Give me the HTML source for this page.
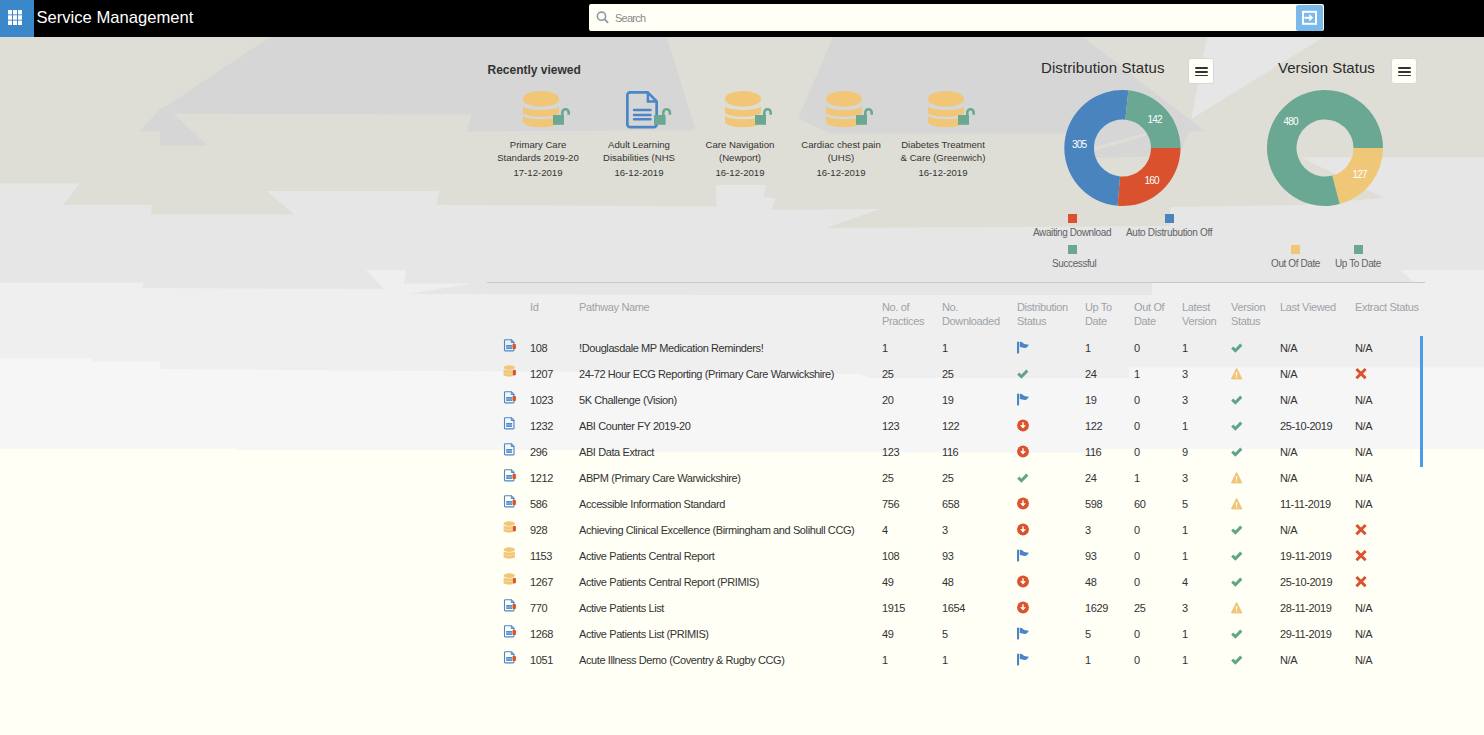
<!DOCTYPE html>
<html><head><meta charset="utf-8"><style>
html,body{margin:0;padding:0;}
body{width:1484px;height:735px;overflow:hidden;position:relative;background:#fffff5;font-family:"Liberation Sans",sans-serif;color:#333;}
.abs{position:absolute;}
#bg{position:absolute;left:0;top:0;}
#top{position:absolute;left:0;top:0;width:1484px;height:37px;background:#000;}
#apps{position:absolute;left:0;top:0;width:34px;height:37px;background:#3a88c9;}
#title{position:absolute;left:36.5px;top:7px;font-size:16.6px;color:#fff;line-height:22px;white-space:nowrap;}
#search{position:absolute;left:589px;top:4px;width:735px;height:27px;background:#fffff6;border-radius:2px;}
#stext{position:absolute;left:26px;top:7px;font-size:11px;color:#8a8a8a;line-height:14px;letter-spacing:-0.75px;}
#sbtn{position:absolute;left:707px;top:1px;width:27px;height:26px;background:#79b9eb;border-radius:2px;}
.th{position:absolute;top:300px;font-size:11px;line-height:14px;color:#9ea3a8;letter-spacing:-0.35px;white-space:nowrap;}
.td{position:absolute;font-size:11px;line-height:26px;height:26px;color:#333;letter-spacing:-0.4px;white-space:nowrap;}
.ic{position:absolute;line-height:0;}
.ic svg{display:block;}
#rvh{position:absolute;left:487.5px;top:62.6px;font-size:12px;font-weight:bold;color:#333;white-space:nowrap;}
.rvi{position:absolute;top:91px;}
.rvt{position:absolute;top:138.4px;width:120px;text-align:center;font-size:9.6px;line-height:13px;color:#333;}
.rvd{margin-top:1.6px;}
.ct{position:absolute;top:58px;font-size:15px;color:#2b2b2b;white-space:nowrap;line-height:20px;}
.mb{position:absolute;top:58.2px;width:26px;height:26.2px;background:#fffff6;border:1px solid #d6d6e0;border-radius:3px;box-sizing:border-box;}
.mb i{position:absolute;left:5.5px;width:13px;height:1.7px;background:#333;border-radius:1px;}
.lg{position:absolute;width:9px;height:9px;}
.lt{position:absolute;font-size:10px;color:#636363;white-space:nowrap;letter-spacing:-0.4px;line-height:12px;}
.dl{position:absolute;font-size:10px;color:#fff;white-space:nowrap;line-height:12px;letter-spacing:-0.75px;}
</style></head><body>
<svg id="bg" width="1484" height="735" viewBox="0 0 1484 735"><rect x="0" y="0" width="1484" height="735" fill="#fffff5"/>
<polygon fill="#f6f6f6" points="0,37 1484,37 1484,449 1100,449 1100,452.5 600,452 600,450 236,450 236,448.5 0,448.5"/>
<polygon fill="#efefef" points="0,37 1484,37 1484,367.5 1129,367.5 1129,378 870,378 860,374 160,369 160,361.5 92,361.5 92,358.5 0,358.5"/>
<polygon fill="#e6e6e6" points="0,37 1484,37 1484,270 1400,270 1415,282.5 1152,282.5 1152,295 700,295 409,294 472.6,283.6 403.6,283.6 406,270 366,270 384,289 143,288 143,282.5 0,282.5"/>
<polygon fill="#dfded6" points="0,37 1484,37 1484,157.5 1301.5,157.5 1384,198 1300,205 1170,207 1170,226 825.6,228 880,209 771,210 775.8,198.6 763.7,196.7 766,185 716,185 716.4,206.4 436,205 439.2,191 266.8,191 294.3,214.6 151.4,214.6 151.4,205 63,205 79.6,183.6 0,183.6"/>
<polygon fill="#d6d6d6" points="270,37 667,37 695.4,130.3 467,131.5 471.4,114.5 173.5,113.7 207.5,145.7 160,145.7 160,131.4 139,131.4 161,108 165,107"/>
<polygon fill="#d6d6d6" points="833,37 1083,37 1205,131.2 1188.4,131.8 1179.7,155.7 1094,158 1094,133.5 829.5,133.4 798,118.3"/>
<polygon fill="#dfded6" points="1094.8,147 1146,133 1146,135.5 1094.8,150.5"/>
<polygon fill="#e6e6e6" points="1207,37 1323.5,37 1191.6,118.7"/>
</svg>
<div id="top">
 <div id="apps"><svg width="34" height="37" viewBox="0 0 34 37" style="position:absolute;left:0;top:0">
 <g fill="#fff"><rect x="8" y="10" width="4" height="4.4"/><rect x="13" y="10" width="4" height="4.4"/><rect x="18" y="10" width="4" height="4.4"/><rect x="8" y="15.3" width="4" height="4.4"/><rect x="13" y="15.3" width="4" height="4.4"/><rect x="18" y="15.3" width="4" height="4.4"/><rect x="8" y="20.6" width="4" height="4.4"/><rect x="13" y="20.6" width="4" height="4.4"/><rect x="18" y="20.6" width="4" height="4.4"/></g></svg></div>
 <div id="title">Service Management</div>
 <div id="search">
  <svg width="20" height="20" viewBox="0 0 20 20" style="position:absolute;left:5px;top:5px"><circle cx="7.5" cy="7.2" r="4.1" fill="none" stroke="#8d9aa6" stroke-width="1.6"/><path d="M10.8 10.3 L13.6 13.4" stroke="#8d9aa6" stroke-width="1.8" stroke-linecap="round"/></svg>
  <div id="stext">Search</div>
  <div id="sbtn"><svg width="27" height="26" viewBox="0 0 27 26" style="position:absolute;left:0;top:0"><rect x="7" y="6.8" width="13" height="12" fill="none" stroke="#fff" stroke-width="2"/><path d="M8.5 12.8 H14.2" stroke="#fff" stroke-width="2"/><path d="M13.4 9 L17.2 12.8 L13.4 16.6z" fill="#fff"/></svg></div>
 </div>
</div>
<div id="rvh">Recently viewed</div>
<svg class="rvi" style="left:523px" width="50" height="40" viewBox="0 0 50 40"><ellipse cx="18" cy="7.9" rx="18" ry="7.9" fill="#f1c677"/><path d="M0 14.8 A18 4.3 0 0 0 36 14.8 V21.6 A18 4.2 0 0 1 0 21.6z" fill="#f1c677"/><path d="M0 24.6 A18 3.7 0 0 0 36 24.6 V30.7 A18 5.6 0 0 1 0 30.7z" fill="#f1c677"/><rect x="30" y="24" width="11" height="9.8" fill="#6aa892"/><path d="M39.3 24.5 V21.5 A3.2 3.2 0 0 1 45.7 21.5 V23.8" fill="none" stroke="#6aa892" stroke-width="2.6"/></svg>
<div class="rvt" style="left:478px">Primary Care<br>Standards 2019-20<div class="rvd">17-12-2019</div></div>
<svg class="rvi" style="left:626px" width="50" height="40" viewBox="0 0 50 40"><path d="M4.2 1.35 H21.8 L30.65 10.4 V33.4 A2.8 2.8 0 0 1 27.85 36.2 H4.15 A2.8 2.8 0 0 1 1.35 33.4 V4.15 A2.8 2.8 0 0 1 4.2 1.35z" fill="none" stroke="#4a86c6" stroke-width="2.7" stroke-linejoin="round"/><path d="M21.9 1.4 V10.4 H30.6" fill="none" stroke="#4a86c6" stroke-width="2.5"/><path d="M8 19 H24.5 M8 24 H24.5 M8 28.3 H24.5" stroke="#4a86c6" stroke-width="2.4" stroke-linecap="round"/><rect x="28" y="24" width="11.6" height="9.8" fill="#6aa892"/><path d="M37.3 24.5 V21.5 A3.3 3.3 0 0 1 43.9 21.5 V23.8" fill="none" stroke="#6aa892" stroke-width="2.6"/></svg>
<div class="rvt" style="left:579px">Adult Learning<br>Disabilities (NHS<div class="rvd">16-12-2019</div></div>
<svg class="rvi" style="left:725px" width="50" height="40" viewBox="0 0 50 40"><ellipse cx="18" cy="7.9" rx="18" ry="7.9" fill="#f1c677"/><path d="M0 14.8 A18 4.3 0 0 0 36 14.8 V21.6 A18 4.2 0 0 1 0 21.6z" fill="#f1c677"/><path d="M0 24.6 A18 3.7 0 0 0 36 24.6 V30.7 A18 5.6 0 0 1 0 30.7z" fill="#f1c677"/><rect x="30" y="24" width="11" height="9.8" fill="#6aa892"/><path d="M39.3 24.5 V21.5 A3.2 3.2 0 0 1 45.7 21.5 V23.8" fill="none" stroke="#6aa892" stroke-width="2.6"/></svg>
<div class="rvt" style="left:680px">Care Navigation<br>(Newport)<div class="rvd">16-12-2019</div></div>
<svg class="rvi" style="left:826px" width="50" height="40" viewBox="0 0 50 40"><ellipse cx="18" cy="7.9" rx="18" ry="7.9" fill="#f1c677"/><path d="M0 14.8 A18 4.3 0 0 0 36 14.8 V21.6 A18 4.2 0 0 1 0 21.6z" fill="#f1c677"/><path d="M0 24.6 A18 3.7 0 0 0 36 24.6 V30.7 A18 5.6 0 0 1 0 30.7z" fill="#f1c677"/><rect x="30" y="24" width="11" height="9.8" fill="#6aa892"/><path d="M39.3 24.5 V21.5 A3.2 3.2 0 0 1 45.7 21.5 V23.8" fill="none" stroke="#6aa892" stroke-width="2.6"/></svg>
<div class="rvt" style="left:781px">Cardiac chest pain<br>(UHS)<div class="rvd">16-12-2019</div></div>
<svg class="rvi" style="left:928px" width="50" height="40" viewBox="0 0 50 40"><ellipse cx="18" cy="7.9" rx="18" ry="7.9" fill="#f1c677"/><path d="M0 14.8 A18 4.3 0 0 0 36 14.8 V21.6 A18 4.2 0 0 1 0 21.6z" fill="#f1c677"/><path d="M0 24.6 A18 3.7 0 0 0 36 24.6 V30.7 A18 5.6 0 0 1 0 30.7z" fill="#f1c677"/><rect x="30" y="24" width="11" height="9.8" fill="#6aa892"/><path d="M39.3 24.5 V21.5 A3.2 3.2 0 0 1 45.7 21.5 V23.8" fill="none" stroke="#6aa892" stroke-width="2.6"/></svg>
<div class="rvt" style="left:883px">Diabetes Treatment<br>&amp; Care (Greenwich)<div class="rvd">16-12-2019</div></div>
<div class="ct" style="left:1041px;letter-spacing:0.1px">Distribution Status</div>
<div class="mb" style="left:1188.4px"><i style="top:7.9px"></i><i style="top:11.8px"></i><i style="top:15.4px"></i></div>
<div class="ct" style="left:1278px">Version Status</div>
<div class="mb" style="left:1391.4px"><i style="top:7.9px"></i><i style="top:11.8px"></i><i style="top:15.4px"></i></div>
<svg class="abs" style="left:0;top:0" width="1484" height="300" viewBox="0 0 1484 300"><path d="M1180.50 148.00 A58 58 0 0 1 1117.55 205.79 L1120.07 176.40 A28.5 28.5 0 0 0 1151.00 148.00z" fill="#d9522d"/><path d="M1117.55 205.79 A58 58 0 1 1 1128.34 90.30 L1125.37 119.65 A28.5 28.5 0 1 0 1120.07 176.40z" fill="#4a84bf"/><path d="M1128.34 90.30 A58 58 0 0 1 1180.50 148.00 L1151.00 148.00 A28.5 28.5 0 0 0 1125.37 119.65z" fill="#6aa893"/><path d="M1383.00 148.00 A58 58 0 0 1 1339.70 204.11 L1332.22 175.57 A28.5 28.5 0 0 0 1353.50 148.00z" fill="#f0c677"/><path d="M1339.70 204.11 A58 58 0 1 1 1383.00 148.00 L1353.50 148.00 A28.5 28.5 0 1 0 1332.22 175.57z" fill="#6aa893"/></svg>
<div class="dl" style="left:1072px;top:138.6px">305</div>
<div class="dl" style="left:1147.5px;top:113.6px">142</div>
<div class="dl" style="left:1144.5px;top:174.6px">160</div>
<div class="dl" style="left:1283.5px;top:115.6px">480</div>
<div class="dl" style="left:1352.5px;top:168.6px">127</div>
<div class="lg" style="left:1068px;top:214px;background:#d9522d"></div>
<div class="lt" style="left:1033px;top:227px">Awaiting Download</div>
<div class="lg" style="left:1165px;top:214px;background:#4a84bf"></div>
<div class="lt" style="left:1126px;top:227px;letter-spacing:-0.3px">Auto Distrubution Off</div>
<div class="lg" style="left:1068px;top:245px;background:#6aa893"></div>
<div class="lt" style="left:1052px;top:258px">Successful</div>
<div class="lg" style="left:1291px;top:245px;background:#f0c677"></div>
<div class="lt" style="left:1271px;top:258px">Out Of Date</div>
<div class="lg" style="left:1354px;top:245px;background:#6aa893"></div>
<div class="lt" style="left:1335px;top:258px">Up To Date</div>
<div class="abs" style="left:487px;top:282px;width:938px;height:1px;background:#c9c9c9"></div>
<div class="th" style="left:530px">Id</div>
<div class="th" style="left:579px">Pathway Name</div>
<div class="th" style="left:882px">No. of<br>Practices</div>
<div class="th" style="left:942px">No.<br>Downloaded</div>
<div class="th" style="left:1017px">Distribution<br>Status</div>
<div class="th" style="left:1085px">Up To<br>Date</div>
<div class="th" style="left:1134px">Out Of<br>Date</div>
<div class="th" style="left:1182px">Latest<br>Version</div>
<div class="th" style="left:1231px">Version<br>Status</div>
<div class="th" style="left:1280px">Last Viewed</div>
<div class="th" style="left:1355px">Extract Status</div>
<div class="ic" style="left:503px;top:338.0px"><svg width="17" height="15" viewBox="0 0 17 15"><path d="M2.3 1.7 H8.4 L11 4.3 V12.1 Q11 12.9 10.2 12.9 H2.3 Q1.5 12.9 1.5 12.1 V2.5 Q1.5 1.7 2.3 1.7z" fill="none" stroke="#4a86c6" stroke-width="1.1"/><path d="M8.3 1.8 V4.5 H11" fill="none" stroke="#4a86c6" stroke-width="1"/><rect x="3.2" y="7.2" width="5.9" height="3.5" fill="#8fb0da"/><rect x="3.2" y="7.1" width="5.9" height="1.1" fill="#4a86c6"/><rect x="3.2" y="9.7" width="5.9" height="1.1" fill="#4a86c6"/><rect x="9.5" y="6" width="3.4" height="5" rx="0.8" fill="#d9532c"/></svg></div>
<div class="td" style="left:530px;top:334.7px">108</div>
<div class="td" style="left:579px;top:334.7px">!Douglasdale MP Medication Reminders!</div>
<div class="td" style="left:882px;top:334.7px">1</div>
<div class="td" style="left:942px;top:334.7px">1</div>
<div class="ic" style="left:1016px;top:339.5px"><svg width="15" height="15" viewBox="0 0 15 15"><rect x="1" y="1.7" width="2.1" height="11.7" fill="#4a86c6"/><path d="M3.8 1.8 C5.6 1.5 6.6 2.6 7.6 3.5 S10.6 4.5 12.9 4.7 L11.5 6.7 Q10 8.1 8.3 7.9 T3.8 7.1 Z" fill="#4a86c6"/></svg></div>
<div class="td" style="left:1085px;top:334.7px">1</div>
<div class="td" style="left:1134px;top:334.7px">0</div>
<div class="td" style="left:1182px;top:334.7px">1</div>
<div class="ic" style="left:1230px;top:339.5px"><svg width="15" height="15" viewBox="0 0 15 15"><path d="M2.2 7.7 L5.4 10.7 L11.3 4.6" fill="none" stroke="#62a48b" stroke-width="3"/></svg></div>
<div class="td" style="left:1280px;top:334.7px">N/A</div>
<div class="td" style="left:1355px;top:334.7px">N/A</div><div class="ic" style="left:503px;top:364.0px"><svg width="17" height="15" viewBox="0 0 17 15"><ellipse cx="6.3" cy="3.6" rx="5.6" ry="2.3" fill="#f1c677"/><path d="M0.7 6.1 Q6.3 7.6 11.9 6.1 V8.4 Q6.3 9.9 0.7 8.4z" fill="#f1c677"/><path d="M0.7 9.1 Q6.3 10.6 11.9 9.1 V11.3 Q6.3 14 0.7 11.3z" fill="#f1c677"/><path d="M0.7 5.2 Q6.3 7.2 11.9 5.2 V12 H0.7z" fill="#f1c677" opacity="0.45"/><rect x="9.9" y="6" width="3" height="5.2" rx="0.8" fill="#d9532c"/></svg></div>
<div class="td" style="left:530px;top:360.7px">1207</div>
<div class="td" style="left:579px;top:360.7px">24-72 Hour ECG Reporting (Primary Care Warwickshire)</div>
<div class="td" style="left:882px;top:360.7px">25</div>
<div class="td" style="left:942px;top:360.7px">25</div>
<div class="ic" style="left:1016px;top:365.5px"><svg width="15" height="15" viewBox="0 0 15 15"><path d="M2.2 7.7 L5.4 10.7 L11.3 4.6" fill="none" stroke="#62a48b" stroke-width="3"/></svg></div>
<div class="td" style="left:1085px;top:360.7px">24</div>
<div class="td" style="left:1134px;top:360.7px">1</div>
<div class="td" style="left:1182px;top:360.7px">3</div>
<div class="ic" style="left:1230px;top:365.5px"><svg width="15" height="15" viewBox="0 0 15 15"><path d="M6.6 2.4 L11.9 12.9 H1.4z" fill="#f0c576" stroke="#f0c576" stroke-width="1" stroke-linejoin="round"/><rect x="5.9" y="6.3" width="1.3" height="3.3" fill="#fff"/><rect x="5.9" y="10.6" width="1.3" height="1" fill="#fff"/></svg></div>
<div class="td" style="left:1280px;top:360.7px">N/A</div>
<div class="ic" style="left:1354px;top:365.5px"><svg width="15" height="15" viewBox="0 0 15 15"><path d="M2.4 3 L11.6 12.3 M11.6 3 L2.4 12.3" stroke="#d9532c" stroke-width="3"/></svg></div><div class="ic" style="left:503px;top:390.0px"><svg width="17" height="15" viewBox="0 0 17 15"><path d="M2.3 1.7 H8.4 L11 4.3 V12.1 Q11 12.9 10.2 12.9 H2.3 Q1.5 12.9 1.5 12.1 V2.5 Q1.5 1.7 2.3 1.7z" fill="none" stroke="#4a86c6" stroke-width="1.1"/><path d="M8.3 1.8 V4.5 H11" fill="none" stroke="#4a86c6" stroke-width="1"/><rect x="3.2" y="7.2" width="5.9" height="3.5" fill="#8fb0da"/><rect x="3.2" y="7.1" width="5.9" height="1.1" fill="#4a86c6"/><rect x="3.2" y="9.7" width="5.9" height="1.1" fill="#4a86c6"/><rect x="9.5" y="6" width="3.4" height="5" rx="0.8" fill="#d9532c"/></svg></div>
<div class="td" style="left:530px;top:386.7px">1023</div>
<div class="td" style="left:579px;top:386.7px">5K Challenge (Vision)</div>
<div class="td" style="left:882px;top:386.7px">20</div>
<div class="td" style="left:942px;top:386.7px">19</div>
<div class="ic" style="left:1016px;top:391.5px"><svg width="15" height="15" viewBox="0 0 15 15"><rect x="1" y="1.7" width="2.1" height="11.7" fill="#4a86c6"/><path d="M3.8 1.8 C5.6 1.5 6.6 2.6 7.6 3.5 S10.6 4.5 12.9 4.7 L11.5 6.7 Q10 8.1 8.3 7.9 T3.8 7.1 Z" fill="#4a86c6"/></svg></div>
<div class="td" style="left:1085px;top:386.7px">19</div>
<div class="td" style="left:1134px;top:386.7px">0</div>
<div class="td" style="left:1182px;top:386.7px">3</div>
<div class="ic" style="left:1230px;top:391.5px"><svg width="15" height="15" viewBox="0 0 15 15"><path d="M2.2 7.7 L5.4 10.7 L11.3 4.6" fill="none" stroke="#62a48b" stroke-width="3"/></svg></div>
<div class="td" style="left:1280px;top:386.7px">N/A</div>
<div class="td" style="left:1355px;top:386.7px">N/A</div><div class="ic" style="left:503px;top:416.0px"><svg width="17" height="15" viewBox="0 0 17 15"><path d="M2.3 1.7 H8.4 L11 4.3 V12.1 Q11 12.9 10.2 12.9 H2.3 Q1.5 12.9 1.5 12.1 V2.5 Q1.5 1.7 2.3 1.7z" fill="none" stroke="#4a86c6" stroke-width="1.1"/><path d="M8.3 1.8 V4.5 H11" fill="none" stroke="#4a86c6" stroke-width="1"/><rect x="3.2" y="7.2" width="5.9" height="3.5" fill="#8fb0da"/><rect x="3.2" y="7.1" width="5.9" height="1.1" fill="#4a86c6"/><rect x="3.2" y="9.7" width="5.9" height="1.1" fill="#4a86c6"/></svg></div>
<div class="td" style="left:530px;top:412.7px">1232</div>
<div class="td" style="left:579px;top:412.7px">ABI Counter FY 2019-20</div>
<div class="td" style="left:882px;top:412.7px">123</div>
<div class="td" style="left:942px;top:412.7px">122</div>
<div class="ic" style="left:1016px;top:417.5px"><svg width="15" height="15" viewBox="0 0 15 15"><circle cx="7" cy="7.5" r="5.9" fill="#d9532c"/><path d="M7 4.2 V8" stroke="#fff" stroke-width="1.7" opacity="0.8"/><path d="M4 7.2 L7 10.4 L10 7.2z" fill="#fff"/></svg></div>
<div class="td" style="left:1085px;top:412.7px">122</div>
<div class="td" style="left:1134px;top:412.7px">0</div>
<div class="td" style="left:1182px;top:412.7px">1</div>
<div class="ic" style="left:1230px;top:417.5px"><svg width="15" height="15" viewBox="0 0 15 15"><path d="M2.2 7.7 L5.4 10.7 L11.3 4.6" fill="none" stroke="#62a48b" stroke-width="3"/></svg></div>
<div class="td" style="left:1280px;top:412.7px">25-10-2019</div>
<div class="td" style="left:1355px;top:412.7px">N/A</div><div class="ic" style="left:503px;top:442.0px"><svg width="17" height="15" viewBox="0 0 17 15"><path d="M2.3 1.7 H8.4 L11 4.3 V12.1 Q11 12.9 10.2 12.9 H2.3 Q1.5 12.9 1.5 12.1 V2.5 Q1.5 1.7 2.3 1.7z" fill="none" stroke="#4a86c6" stroke-width="1.1"/><path d="M8.3 1.8 V4.5 H11" fill="none" stroke="#4a86c6" stroke-width="1"/><rect x="3.2" y="7.2" width="5.9" height="3.5" fill="#8fb0da"/><rect x="3.2" y="7.1" width="5.9" height="1.1" fill="#4a86c6"/><rect x="3.2" y="9.7" width="5.9" height="1.1" fill="#4a86c6"/></svg></div>
<div class="td" style="left:530px;top:438.7px">296</div>
<div class="td" style="left:579px;top:438.7px">ABI Data Extract</div>
<div class="td" style="left:882px;top:438.7px">123</div>
<div class="td" style="left:942px;top:438.7px">116</div>
<div class="ic" style="left:1016px;top:443.5px"><svg width="15" height="15" viewBox="0 0 15 15"><circle cx="7" cy="7.5" r="5.9" fill="#d9532c"/><path d="M7 4.2 V8" stroke="#fff" stroke-width="1.7" opacity="0.8"/><path d="M4 7.2 L7 10.4 L10 7.2z" fill="#fff"/></svg></div>
<div class="td" style="left:1085px;top:438.7px">116</div>
<div class="td" style="left:1134px;top:438.7px">0</div>
<div class="td" style="left:1182px;top:438.7px">9</div>
<div class="ic" style="left:1230px;top:443.5px"><svg width="15" height="15" viewBox="0 0 15 15"><path d="M2.2 7.7 L5.4 10.7 L11.3 4.6" fill="none" stroke="#62a48b" stroke-width="3"/></svg></div>
<div class="td" style="left:1280px;top:438.7px">N/A</div>
<div class="td" style="left:1355px;top:438.7px">N/A</div><div class="ic" style="left:503px;top:468.0px"><svg width="17" height="15" viewBox="0 0 17 15"><path d="M2.3 1.7 H8.4 L11 4.3 V12.1 Q11 12.9 10.2 12.9 H2.3 Q1.5 12.9 1.5 12.1 V2.5 Q1.5 1.7 2.3 1.7z" fill="none" stroke="#4a86c6" stroke-width="1.1"/><path d="M8.3 1.8 V4.5 H11" fill="none" stroke="#4a86c6" stroke-width="1"/><rect x="3.2" y="7.2" width="5.9" height="3.5" fill="#8fb0da"/><rect x="3.2" y="7.1" width="5.9" height="1.1" fill="#4a86c6"/><rect x="3.2" y="9.7" width="5.9" height="1.1" fill="#4a86c6"/><rect x="9.5" y="6" width="3.4" height="5" rx="0.8" fill="#d9532c"/></svg></div>
<div class="td" style="left:530px;top:464.7px">1212</div>
<div class="td" style="left:579px;top:464.7px">ABPM (Primary Care Warwickshire)</div>
<div class="td" style="left:882px;top:464.7px">25</div>
<div class="td" style="left:942px;top:464.7px">25</div>
<div class="ic" style="left:1016px;top:469.5px"><svg width="15" height="15" viewBox="0 0 15 15"><path d="M2.2 7.7 L5.4 10.7 L11.3 4.6" fill="none" stroke="#62a48b" stroke-width="3"/></svg></div>
<div class="td" style="left:1085px;top:464.7px">24</div>
<div class="td" style="left:1134px;top:464.7px">1</div>
<div class="td" style="left:1182px;top:464.7px">3</div>
<div class="ic" style="left:1230px;top:469.5px"><svg width="15" height="15" viewBox="0 0 15 15"><path d="M6.6 2.4 L11.9 12.9 H1.4z" fill="#f0c576" stroke="#f0c576" stroke-width="1" stroke-linejoin="round"/><rect x="5.9" y="6.3" width="1.3" height="3.3" fill="#fff"/><rect x="5.9" y="10.6" width="1.3" height="1" fill="#fff"/></svg></div>
<div class="td" style="left:1280px;top:464.7px">N/A</div>
<div class="td" style="left:1355px;top:464.7px">N/A</div><div class="ic" style="left:503px;top:494.0px"><svg width="17" height="15" viewBox="0 0 17 15"><path d="M2.3 1.7 H8.4 L11 4.3 V12.1 Q11 12.9 10.2 12.9 H2.3 Q1.5 12.9 1.5 12.1 V2.5 Q1.5 1.7 2.3 1.7z" fill="none" stroke="#4a86c6" stroke-width="1.1"/><path d="M8.3 1.8 V4.5 H11" fill="none" stroke="#4a86c6" stroke-width="1"/><rect x="3.2" y="7.2" width="5.9" height="3.5" fill="#8fb0da"/><rect x="3.2" y="7.1" width="5.9" height="1.1" fill="#4a86c6"/><rect x="3.2" y="9.7" width="5.9" height="1.1" fill="#4a86c6"/><rect x="9.5" y="6" width="3.4" height="5" rx="0.8" fill="#d9532c"/></svg></div>
<div class="td" style="left:530px;top:490.7px">586</div>
<div class="td" style="left:579px;top:490.7px">Accessible Information Standard</div>
<div class="td" style="left:882px;top:490.7px">756</div>
<div class="td" style="left:942px;top:490.7px">658</div>
<div class="ic" style="left:1016px;top:495.5px"><svg width="15" height="15" viewBox="0 0 15 15"><circle cx="7" cy="7.5" r="5.9" fill="#d9532c"/><path d="M7 4.2 V8" stroke="#fff" stroke-width="1.7" opacity="0.8"/><path d="M4 7.2 L7 10.4 L10 7.2z" fill="#fff"/></svg></div>
<div class="td" style="left:1085px;top:490.7px">598</div>
<div class="td" style="left:1134px;top:490.7px">60</div>
<div class="td" style="left:1182px;top:490.7px">5</div>
<div class="ic" style="left:1230px;top:495.5px"><svg width="15" height="15" viewBox="0 0 15 15"><path d="M6.6 2.4 L11.9 12.9 H1.4z" fill="#f0c576" stroke="#f0c576" stroke-width="1" stroke-linejoin="round"/><rect x="5.9" y="6.3" width="1.3" height="3.3" fill="#fff"/><rect x="5.9" y="10.6" width="1.3" height="1" fill="#fff"/></svg></div>
<div class="td" style="left:1280px;top:490.7px">11-11-2019</div>
<div class="td" style="left:1355px;top:490.7px">N/A</div><div class="ic" style="left:503px;top:520.0px"><svg width="17" height="15" viewBox="0 0 17 15"><ellipse cx="6.3" cy="3.6" rx="5.6" ry="2.3" fill="#f1c677"/><path d="M0.7 6.1 Q6.3 7.6 11.9 6.1 V8.4 Q6.3 9.9 0.7 8.4z" fill="#f1c677"/><path d="M0.7 9.1 Q6.3 10.6 11.9 9.1 V11.3 Q6.3 14 0.7 11.3z" fill="#f1c677"/><path d="M0.7 5.2 Q6.3 7.2 11.9 5.2 V12 H0.7z" fill="#f1c677" opacity="0.45"/><rect x="9.9" y="6" width="3" height="5.2" rx="0.8" fill="#d9532c"/></svg></div>
<div class="td" style="left:530px;top:516.7px">928</div>
<div class="td" style="left:579px;top:516.7px">Achieving Clinical Excellence (Birmingham and Solihull CCG)</div>
<div class="td" style="left:882px;top:516.7px">4</div>
<div class="td" style="left:942px;top:516.7px">3</div>
<div class="ic" style="left:1016px;top:521.5px"><svg width="15" height="15" viewBox="0 0 15 15"><circle cx="7" cy="7.5" r="5.9" fill="#d9532c"/><path d="M7 4.2 V8" stroke="#fff" stroke-width="1.7" opacity="0.8"/><path d="M4 7.2 L7 10.4 L10 7.2z" fill="#fff"/></svg></div>
<div class="td" style="left:1085px;top:516.7px">3</div>
<div class="td" style="left:1134px;top:516.7px">0</div>
<div class="td" style="left:1182px;top:516.7px">1</div>
<div class="ic" style="left:1230px;top:521.5px"><svg width="15" height="15" viewBox="0 0 15 15"><path d="M2.2 7.7 L5.4 10.7 L11.3 4.6" fill="none" stroke="#62a48b" stroke-width="3"/></svg></div>
<div class="td" style="left:1280px;top:516.7px">N/A</div>
<div class="ic" style="left:1354px;top:521.5px"><svg width="15" height="15" viewBox="0 0 15 15"><path d="M2.4 3 L11.6 12.3 M11.6 3 L2.4 12.3" stroke="#d9532c" stroke-width="3"/></svg></div><div class="ic" style="left:503px;top:546.0px"><svg width="17" height="15" viewBox="0 0 17 15"><ellipse cx="6.3" cy="3.6" rx="5.6" ry="2.3" fill="#f1c677"/><path d="M0.7 6.1 Q6.3 7.6 11.9 6.1 V8.4 Q6.3 9.9 0.7 8.4z" fill="#f1c677"/><path d="M0.7 9.1 Q6.3 10.6 11.9 9.1 V11.3 Q6.3 14 0.7 11.3z" fill="#f1c677"/><path d="M0.7 5.2 Q6.3 7.2 11.9 5.2 V12 H0.7z" fill="#f1c677" opacity="0.45"/></svg></div>
<div class="td" style="left:530px;top:542.7px">1153</div>
<div class="td" style="left:579px;top:542.7px">Active Patients Central Report</div>
<div class="td" style="left:882px;top:542.7px">108</div>
<div class="td" style="left:942px;top:542.7px">93</div>
<div class="ic" style="left:1016px;top:547.5px"><svg width="15" height="15" viewBox="0 0 15 15"><rect x="1" y="1.7" width="2.1" height="11.7" fill="#4a86c6"/><path d="M3.8 1.8 C5.6 1.5 6.6 2.6 7.6 3.5 S10.6 4.5 12.9 4.7 L11.5 6.7 Q10 8.1 8.3 7.9 T3.8 7.1 Z" fill="#4a86c6"/></svg></div>
<div class="td" style="left:1085px;top:542.7px">93</div>
<div class="td" style="left:1134px;top:542.7px">0</div>
<div class="td" style="left:1182px;top:542.7px">1</div>
<div class="ic" style="left:1230px;top:547.5px"><svg width="15" height="15" viewBox="0 0 15 15"><path d="M2.2 7.7 L5.4 10.7 L11.3 4.6" fill="none" stroke="#62a48b" stroke-width="3"/></svg></div>
<div class="td" style="left:1280px;top:542.7px">19-11-2019</div>
<div class="ic" style="left:1354px;top:547.5px"><svg width="15" height="15" viewBox="0 0 15 15"><path d="M2.4 3 L11.6 12.3 M11.6 3 L2.4 12.3" stroke="#d9532c" stroke-width="3"/></svg></div><div class="ic" style="left:503px;top:572.0px"><svg width="17" height="15" viewBox="0 0 17 15"><ellipse cx="6.3" cy="3.6" rx="5.6" ry="2.3" fill="#f1c677"/><path d="M0.7 6.1 Q6.3 7.6 11.9 6.1 V8.4 Q6.3 9.9 0.7 8.4z" fill="#f1c677"/><path d="M0.7 9.1 Q6.3 10.6 11.9 9.1 V11.3 Q6.3 14 0.7 11.3z" fill="#f1c677"/><path d="M0.7 5.2 Q6.3 7.2 11.9 5.2 V12 H0.7z" fill="#f1c677" opacity="0.45"/><rect x="9.9" y="6" width="3" height="5.2" rx="0.8" fill="#d9532c"/></svg></div>
<div class="td" style="left:530px;top:568.7px">1267</div>
<div class="td" style="left:579px;top:568.7px">Active Patients Central Report (PRIMIS)</div>
<div class="td" style="left:882px;top:568.7px">49</div>
<div class="td" style="left:942px;top:568.7px">48</div>
<div class="ic" style="left:1016px;top:573.5px"><svg width="15" height="15" viewBox="0 0 15 15"><circle cx="7" cy="7.5" r="5.9" fill="#d9532c"/><path d="M7 4.2 V8" stroke="#fff" stroke-width="1.7" opacity="0.8"/><path d="M4 7.2 L7 10.4 L10 7.2z" fill="#fff"/></svg></div>
<div class="td" style="left:1085px;top:568.7px">48</div>
<div class="td" style="left:1134px;top:568.7px">0</div>
<div class="td" style="left:1182px;top:568.7px">4</div>
<div class="ic" style="left:1230px;top:573.5px"><svg width="15" height="15" viewBox="0 0 15 15"><path d="M2.2 7.7 L5.4 10.7 L11.3 4.6" fill="none" stroke="#62a48b" stroke-width="3"/></svg></div>
<div class="td" style="left:1280px;top:568.7px">25-10-2019</div>
<div class="ic" style="left:1354px;top:573.5px"><svg width="15" height="15" viewBox="0 0 15 15"><path d="M2.4 3 L11.6 12.3 M11.6 3 L2.4 12.3" stroke="#d9532c" stroke-width="3"/></svg></div><div class="ic" style="left:503px;top:598.0px"><svg width="17" height="15" viewBox="0 0 17 15"><path d="M2.3 1.7 H8.4 L11 4.3 V12.1 Q11 12.9 10.2 12.9 H2.3 Q1.5 12.9 1.5 12.1 V2.5 Q1.5 1.7 2.3 1.7z" fill="none" stroke="#4a86c6" stroke-width="1.1"/><path d="M8.3 1.8 V4.5 H11" fill="none" stroke="#4a86c6" stroke-width="1"/><rect x="3.2" y="7.2" width="5.9" height="3.5" fill="#8fb0da"/><rect x="3.2" y="7.1" width="5.9" height="1.1" fill="#4a86c6"/><rect x="3.2" y="9.7" width="5.9" height="1.1" fill="#4a86c6"/><rect x="9.5" y="6" width="3.4" height="5" rx="0.8" fill="#d9532c"/></svg></div>
<div class="td" style="left:530px;top:594.7px">770</div>
<div class="td" style="left:579px;top:594.7px">Active Patients List</div>
<div class="td" style="left:882px;top:594.7px">1915</div>
<div class="td" style="left:942px;top:594.7px">1654</div>
<div class="ic" style="left:1016px;top:599.5px"><svg width="15" height="15" viewBox="0 0 15 15"><circle cx="7" cy="7.5" r="5.9" fill="#d9532c"/><path d="M7 4.2 V8" stroke="#fff" stroke-width="1.7" opacity="0.8"/><path d="M4 7.2 L7 10.4 L10 7.2z" fill="#fff"/></svg></div>
<div class="td" style="left:1085px;top:594.7px">1629</div>
<div class="td" style="left:1134px;top:594.7px">25</div>
<div class="td" style="left:1182px;top:594.7px">3</div>
<div class="ic" style="left:1230px;top:599.5px"><svg width="15" height="15" viewBox="0 0 15 15"><path d="M6.6 2.4 L11.9 12.9 H1.4z" fill="#f0c576" stroke="#f0c576" stroke-width="1" stroke-linejoin="round"/><rect x="5.9" y="6.3" width="1.3" height="3.3" fill="#fff"/><rect x="5.9" y="10.6" width="1.3" height="1" fill="#fff"/></svg></div>
<div class="td" style="left:1280px;top:594.7px">28-11-2019</div>
<div class="td" style="left:1355px;top:594.7px">N/A</div><div class="ic" style="left:503px;top:624.0px"><svg width="17" height="15" viewBox="0 0 17 15"><path d="M2.3 1.7 H8.4 L11 4.3 V12.1 Q11 12.9 10.2 12.9 H2.3 Q1.5 12.9 1.5 12.1 V2.5 Q1.5 1.7 2.3 1.7z" fill="none" stroke="#4a86c6" stroke-width="1.1"/><path d="M8.3 1.8 V4.5 H11" fill="none" stroke="#4a86c6" stroke-width="1"/><rect x="3.2" y="7.2" width="5.9" height="3.5" fill="#8fb0da"/><rect x="3.2" y="7.1" width="5.9" height="1.1" fill="#4a86c6"/><rect x="3.2" y="9.7" width="5.9" height="1.1" fill="#4a86c6"/><rect x="9.5" y="6" width="3.4" height="5" rx="0.8" fill="#d9532c"/></svg></div>
<div class="td" style="left:530px;top:620.7px">1268</div>
<div class="td" style="left:579px;top:620.7px">Active Patients List (PRIMIS)</div>
<div class="td" style="left:882px;top:620.7px">49</div>
<div class="td" style="left:942px;top:620.7px">5</div>
<div class="ic" style="left:1016px;top:625.5px"><svg width="15" height="15" viewBox="0 0 15 15"><rect x="1" y="1.7" width="2.1" height="11.7" fill="#4a86c6"/><path d="M3.8 1.8 C5.6 1.5 6.6 2.6 7.6 3.5 S10.6 4.5 12.9 4.7 L11.5 6.7 Q10 8.1 8.3 7.9 T3.8 7.1 Z" fill="#4a86c6"/></svg></div>
<div class="td" style="left:1085px;top:620.7px">5</div>
<div class="td" style="left:1134px;top:620.7px">0</div>
<div class="td" style="left:1182px;top:620.7px">1</div>
<div class="ic" style="left:1230px;top:625.5px"><svg width="15" height="15" viewBox="0 0 15 15"><path d="M2.2 7.7 L5.4 10.7 L11.3 4.6" fill="none" stroke="#62a48b" stroke-width="3"/></svg></div>
<div class="td" style="left:1280px;top:620.7px">29-11-2019</div>
<div class="td" style="left:1355px;top:620.7px">N/A</div><div class="ic" style="left:503px;top:650.0px"><svg width="17" height="15" viewBox="0 0 17 15"><path d="M2.3 1.7 H8.4 L11 4.3 V12.1 Q11 12.9 10.2 12.9 H2.3 Q1.5 12.9 1.5 12.1 V2.5 Q1.5 1.7 2.3 1.7z" fill="none" stroke="#4a86c6" stroke-width="1.1"/><path d="M8.3 1.8 V4.5 H11" fill="none" stroke="#4a86c6" stroke-width="1"/><rect x="3.2" y="7.2" width="5.9" height="3.5" fill="#8fb0da"/><rect x="3.2" y="7.1" width="5.9" height="1.1" fill="#4a86c6"/><rect x="3.2" y="9.7" width="5.9" height="1.1" fill="#4a86c6"/><rect x="9.5" y="6" width="3.4" height="5" rx="0.8" fill="#d9532c"/></svg></div>
<div class="td" style="left:530px;top:646.7px">1051</div>
<div class="td" style="left:579px;top:646.7px">Acute Illness Demo (Coventry &amp; Rugby CCG)</div>
<div class="td" style="left:882px;top:646.7px">1</div>
<div class="td" style="left:942px;top:646.7px">1</div>
<div class="ic" style="left:1016px;top:651.5px"><svg width="15" height="15" viewBox="0 0 15 15"><rect x="1" y="1.7" width="2.1" height="11.7" fill="#4a86c6"/><path d="M3.8 1.8 C5.6 1.5 6.6 2.6 7.6 3.5 S10.6 4.5 12.9 4.7 L11.5 6.7 Q10 8.1 8.3 7.9 T3.8 7.1 Z" fill="#4a86c6"/></svg></div>
<div class="td" style="left:1085px;top:646.7px">1</div>
<div class="td" style="left:1134px;top:646.7px">0</div>
<div class="td" style="left:1182px;top:646.7px">1</div>
<div class="ic" style="left:1230px;top:651.5px"><svg width="15" height="15" viewBox="0 0 15 15"><path d="M2.2 7.7 L5.4 10.7 L11.3 4.6" fill="none" stroke="#62a48b" stroke-width="3"/></svg></div>
<div class="td" style="left:1280px;top:646.7px">N/A</div>
<div class="td" style="left:1355px;top:646.7px">N/A</div>
<div class="abs" style="left:1420px;top:336px;width:3px;height:131px;background:#4a9be8"></div>
</body></html>
